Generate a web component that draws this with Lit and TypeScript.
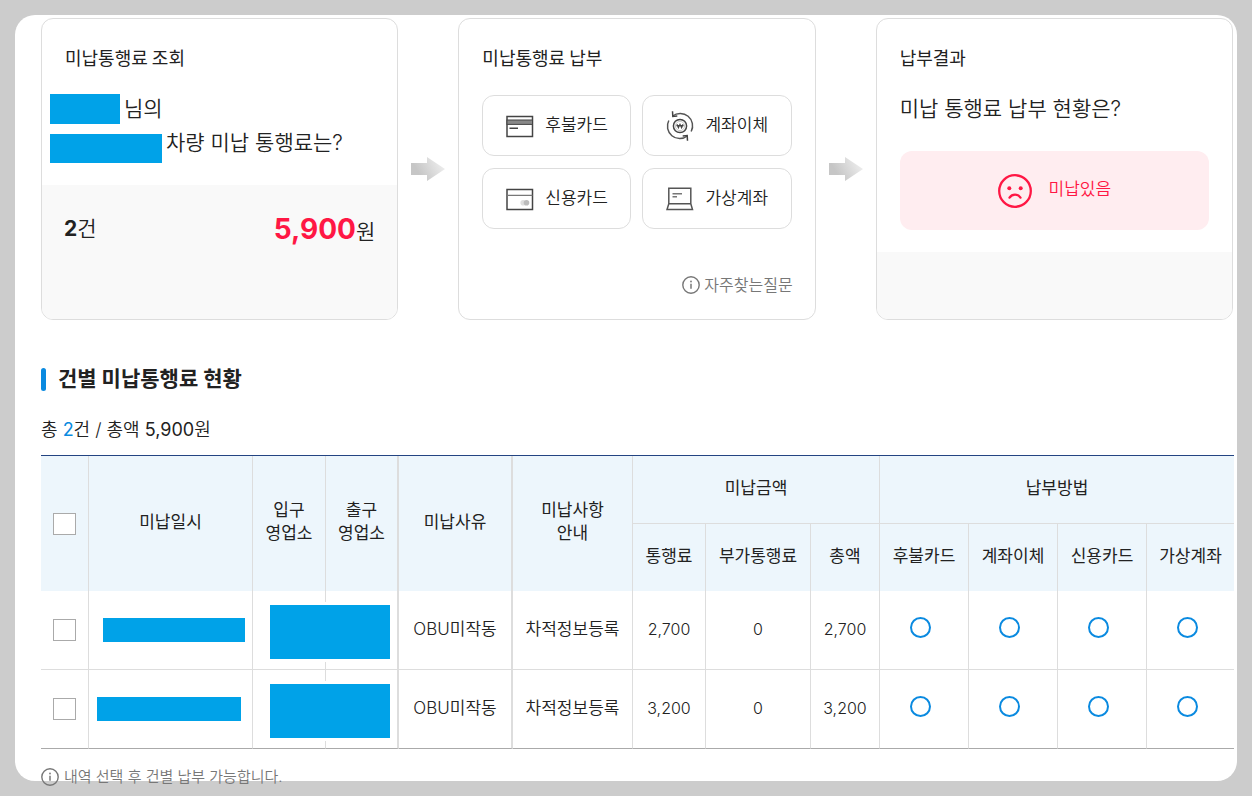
import { LitElement, html, css, svg } from "lit";
import { customElement, state } from "lit/decorators.js";

interface UnpaidToll {
  id: string;
  reason: string;
  notice: string;
  toll: number;
  surcharge: number;
}

const METHODS = ["후불카드", "계좌이체", "신용카드", "가상계좌"];

const TOLLS: UnpaidToll[] = [
  { id: "a", reason: "OBU미작동", notice: "차적정보등록", toll: 2700, surcharge: 0 },
  { id: "b", reason: "OBU미작동", notice: "차적정보등록", toll: 3200, surcharge: 0 },
];

const won = (n: number) => n.toLocaleString("en-US");

const methodIcons = [
  svg`<rect x="1" y="5.5" width="25.5" height="20" /><rect x="1" y="9" width="25.5" height="4.4" fill="#888" stroke="#444" stroke-width="1" /><path d="M3.500 17.300h8.500" stroke-width="1.4" />`,
  svg`<circle cx="14" cy="15" r="6.600" /><circle cx="14" cy="15" r="4.600" stroke="#bbb" stroke-width="0.800" /><path d="M6.600 5A12.400 12.400 0 0 1 25.200 20.500M21.400 25A12.400 12.400 0 0 1 2.800 9.500" stroke="#555" /><path d="M6.500 0.200l0.300 5.200 4.500-.4M21.500 29.800l-.3-5.200-4.500.4" /><path d="M11 13.300l1.400 3.400 1.600-3.400 1.600 3.400 1.400-3.400M10.400 14.700h7.200" stroke-width="1.200" />`,
  svg`<rect x="1" y="5.5" width="25.5" height="20" /><path d="M1 11.3h25.500" stroke="#777" stroke-width="1.3" /><circle cx="17.200" cy="18.800" r="2.800" fill="#ddd" stroke="none" /><circle cx="20.500" cy="18.800" r="2.800" fill="#bbb" stroke="none" />`,
  svg`<path d="M2.800 19.500V4.200h22v15.300M2.800 19.800h22l1.700 5.700H1z" stroke="#555" /><path d="M6.500 9.800h9.500M6.500 12.800h4.500" stroke="#777" />`,
];

const infoIcon = html`<svg class="info" viewBox="0 0 18 18" aria-hidden="true">
  <circle cx="9" cy="9" r="8.200" fill="none" stroke="currentColor" stroke-width="1.400" />
  <path d="M9 7.800v5" stroke="currentColor" stroke-width="1.500" />
  <circle cx="9" cy="5.500" r="0.900" fill="currentColor" />
</svg>`;

const arrow = (id: string) => html`<svg class="arrow" viewBox="0 0 34 24" aria-hidden="true">
  <defs>
    <linearGradient id=${id} x1="0" y1="0.400" x2="1" y2="0">
      <stop offset="0.100" stop-color="#c6c6c6" />
      <stop offset="1" stop-color="#f5f5f5" />
    </linearGradient>
  </defs>
  <path d="M0 6h16V0l18 12-18 12v-6H0z" fill="url(#${id})" />
</svg>`;

@customElement("app-root")
export class AppRoot extends LitElement {
  @state() private selected = new Set<string>();

  static styles = css`
    :host {
      display: block;
      box-sizing: border-box;
      min-height: 100vh;
      padding: 15px;
      background: #ccc;
      color: #222;
      font: 350 17px/24px Inter, "Noto Sans CJK KR", sans-serif;
    }
    * { box-sizing: border-box; }
    h2, h3, p { margin: 0; }
    .panel {
      display: flow-root;
      background: #fff;
      border-radius: 20px;
      padding: 3px 3px 0 26px;
    }
    .steps {
      display: grid;
      grid-template-columns: 1fr 60px 1fr 60px 1fr;
      align-items: center;
      margin-right: 1px;
    }
    .card {
      align-self: stretch;
      display: flex;
      flex-direction: column;
      min-height: 302px;
      border: 1px solid #ddd;
      border-radius: 12px;
      overflow: hidden;
    }
    .card-title {
      padding: 26px 23px 0;
      font: 400 18px/24px "Noto Sans CJK KR", sans-serif;
    }
    .arrow { width: 34px; height: 24px; justify-self: center; }
    .lead {
      font-size: 21px;
      line-height: 34px;
    }
    .greeting { padding: 23px 8px 22px; }
    .line { display: flex; align-items: center; gap: 4px; }
    .line.plate { align-items: flex-start; height: 37px; }
    .mask { display: block; background: #00a2e8; }
    .mask.name { width: 70px; height: 30px; }
    .mask.car { width: 112px; height: 29px; align-self: flex-end; }
    .foot { flex: 1; background: #f9f9f9; }
    .sum {
      display: flex;
      justify-content: space-between;
      padding: 22px 22px;
      font-size: 21px;
      line-height: 44px;
    }
    .sum b { font-weight: 700; }
    .sum .total { font-size: 28px; color: #ff1744; }
    .methods {
      display: grid;
      grid-template-columns: 1fr 1fr;
      gap: 12px 11px;
      padding: 26px 23px 0;
    }
    .method {
      display: flex;
      align-items: center;
      gap: 11px;
      height: 61px;
      padding: 0 22px 0 23px;
      border: 1px solid #ddd;
      border-radius: 12px;
      background: #fff;
      color: inherit;
      font: 350 17px/24px "Noto Sans CJK KR", sans-serif;
      white-space: nowrap;
      cursor: pointer;
    }
    .method svg {
      flex: none;
      width: 28px;
      height: 30px;
      fill: none;
      stroke: #444;
      stroke-width: 1.5;
    }
    .method span, .status span { padding-bottom: 3px; }
    .faq {
      display: flex;
      align-items: center;
      gap: 4px;
      align-self: flex-end;
      margin: 44px 22px 0;
      font-size: 16px;
      color: #777;
      text-decoration: none;
    }
    .info { flex: none; width: 18px; height: 18px; }
    .question { padding: 23px 23px 0; }
    .status {
      display: flex;
      align-items: center;
      justify-content: center;
      gap: 17px;
      height: 79px;
      margin: 25px 23px 22px;
      border-radius: 12px;
      background: #ffedf0;
      color: #ff1744;
    }
    .status svg { width: 34px; height: 34px; }
    .section-title {
      display: flex;
      align-items: center;
      gap: 12px;
      margin-top: 46px;
      font-weight: 700;
      font-size: 21px;
      line-height: 26px;
    }
    .section-title::before {
      content: "";
      width: 5px;
      height: 23px;
      border-radius: 3px;
      background: #0a8ae0;
    }
    .summary {
      margin: 24px 0 12px;
      font-size: 18px;
      line-height: 27px;
    }
    .summary b { font-weight: 400; }
    .summary .count { color: #0a8ae0; }
    table {
      width: 100%;
      table-layout: fixed;
      border-collapse: separate;
      border-spacing: 0;
      border-top: 1px solid #234482;
      text-align: center;
    }
    th, td {
      padding: 0 0 3px;
      border-right: 1px solid #ddd;
      word-break: keep-all;
    }
    th {
      height: 67px;
      background: #edf6fc;
      font-weight: 400;
      line-height: 23px;
    }
    th.group { height: 68px; border-bottom: 1px solid #ddd; }
    td { height: 79px; border-bottom: 1px solid #ddd; }
    .check { padding: 0; }
    tbody tr:last-child td { border-bottom-color: #aaa; }
    .thick { border-right-width: 2px; }
    .last { border-right: 0; }
    .c-check { width: 48px; }
    .c-date { width: 164px; }
    .c-office { width: 73px; }
    .c-reason { width: 114px; }
    .c-notice { width: 120px; }
    .c-extra { width: 105px; }
    .c-sum { width: 69px; }
    .c-method { width: 89px; }
    .c-method-last { width: auto; }
    .mask.date { width: 142px; height: 24px; margin-left: 14px; }
    tr:last-child .mask.date { margin-left: 8px; width: 144px; }
    .office { position: relative; }
    .mask.office-mask {
      position: absolute;
      z-index: 1;
      top: 14px;
      left: 17px;
      width: calc(200% - 24px);
      height: 54px;
      box-shadow: 0 0 0 3px #fff;
    }
    .num { font-size: 16px; font-weight: 300; }
    input { appearance: none; margin: 0; background: #fff; cursor: pointer; }
    input[type="checkbox"] {
      display: block;
      width: 23px;
      height: 22px;
      margin: 0 auto;
      border: 1px solid #aaa;
    }
    input[type="checkbox"]:checked { background: #0a8ae0; }
    input[type="radio"] {
      display: block;
      width: 21px;
      height: 21px;
      margin: 0 auto;
      border: 2px solid #0a8ae0;
      border-radius: 50%;
    }
    input[type="radio"]:checked { background: #0a8ae0; box-shadow: inset 0 0 0 3px #fff; }
    .pay { padding: 0 7px 5px 0; }
    .note {
      display: flex;
      align-items: center;
      gap: 5px;
      margin-top: 16px;
      margin-bottom: -8px;
      font-size: 15px;
      color: #777;
    }
  `;

  private toggle(id: string) {
    const next = new Set(this.selected);
    next.has(id) ? next.delete(id) : next.add(id);
    this.selected = next;
  }

  private toggleAll() {
    this.selected = this.selected.size === TOLLS.length ? new Set() : new Set(TOLLS.map((t) => t.id));
  }

  private row(t: UnpaidToll) {
    return html`<tr>
      <td class="check"><input type="checkbox" aria-label="선택" .checked=${this.selected.has(t.id)} @change=${() => this.toggle(t.id)} /></td>
      <td class="check"><span class="mask date"></span></td>
      <td class="office"><span class="mask office-mask"></span></td>
      <td class="thick"></td>
      <td class="thick">${t.reason}</td>
      <td>${t.notice}</td>
      <td class="num">${won(t.toll)}</td>
      <td class="num">${won(t.surcharge)}</td>
      <td class="num">${won(t.toll + t.surcharge)}</td>
      ${METHODS.map(
        (m, i) => html`<td class="pay ${i === METHODS.length - 1 ? "last" : ""}">
          <input type="radio" name="pay-${t.id}" aria-label=${m} />
        </td>`
      )}
    </tr>`;
  }

  render() {
    const total = TOLLS.reduce((s, t) => s + t.toll + t.surcharge, 0);
    return html`<main class="panel">
      <div class="steps">
        <section class="card">
          <h3 class="card-title">미납통행료 조회</h3>
          <div class="lead greeting">
            <div class="line"><span class="mask name"></span>님의</div>
            <div class="line plate"><span class="mask car"></span>차량 미납 통행료는?</div>
          </div>
          <div class="foot sum">
            <span><b>${TOLLS.length}</b>건</span>
            <span><b class="total">${won(total)}</b>원</span>
          </div>
        </section>
        ${arrow("arrow-pay")}
        <section class="card">
          <h3 class="card-title">미납통행료 납부</h3>
          <div class="methods">
            ${METHODS.map(
              (m, i) => html`<button class="method" type="button">
                <svg viewBox="0 0 28 30" aria-hidden="true">${methodIcons[i]}</svg><span>${m}</span>
              </button>`
            )}
          </div>
          <a class="faq" href="#faq">${infoIcon}자주찾는질문</a>
        </section>
        ${arrow("arrow-result")}
        <section class="card">
          <h3 class="card-title">납부결과</h3>
          <p class="lead question">미납 통행료 납부 현황은?</p>
          <div class="status">
            <svg viewBox="0 0 34 34" aria-hidden="true" fill="none" stroke="currentColor">
              <circle cx="17" cy="17" r="15.800" stroke-width="2.300" />
              <circle cx="11.300" cy="14.200" r="2" fill="currentColor" stroke="none" />
              <circle cx="22.700" cy="14.200" r="2" fill="currentColor" stroke="none" />
              <path d="M11.500 23.600c2.800-4 8.200-4 11 0" stroke-width="2.300" stroke-linecap="round" />
            </svg>
            <span>미납있음</span>
          </div>
          <div class="foot"></div>
        </section>
      </div>

      <h2 class="section-title">건별 미납통행료 현황</h2>
      <p class="summary">총 <b class="count">${TOLLS.length}</b>건 / 총액 <b>${won(total)}</b>원</p>

      <table>
        <colgroup>
          <col class="c-check" /><col class="c-date" /><col class="c-office" /><col class="c-office" />
          <col class="c-reason" /><col class="c-notice" /><col class="c-office" /><col class="c-extra" />
          <col class="c-sum" /><col class="c-method" /><col class="c-method" /><col class="c-method" /><col class="c-method-last" />
        </colgroup>
        <thead>
          <tr>
            <th class="check" rowspan="2">
              <input type="checkbox" aria-label="전체 선택" .checked=${this.selected.size === TOLLS.length} @change=${this.toggleAll} />
            </th>
            <th rowspan="2">미납일시</th>
            <th rowspan="2">입구<br />영업소</th>
            <th class="thick" rowspan="2">출구<br />영업소</th>
            <th class="thick" rowspan="2">미납사유</th>
            <th rowspan="2">미납사항<br />안내</th>
            <th class="group" colspan="3">미납금액</th>
            <th class="group last" colspan="4">납부방법</th>
          </tr>
          <tr>
            <th>통행료</th>
            <th>부가통행료</th>
            <th>총액</th>
            ${METHODS.map((m, i) => html`<th class=${i === METHODS.length - 1 ? "last" : ""}>${m}</th>`)}
          </tr>
        </thead>
        <tbody>
          ${TOLLS.map((t) => this.row(t))}
        </tbody>
      </table>
      <p class="note">${infoIcon}내역 선택 후 건별 납부 가능합니다.</p>
    </main>`;
  }
}
